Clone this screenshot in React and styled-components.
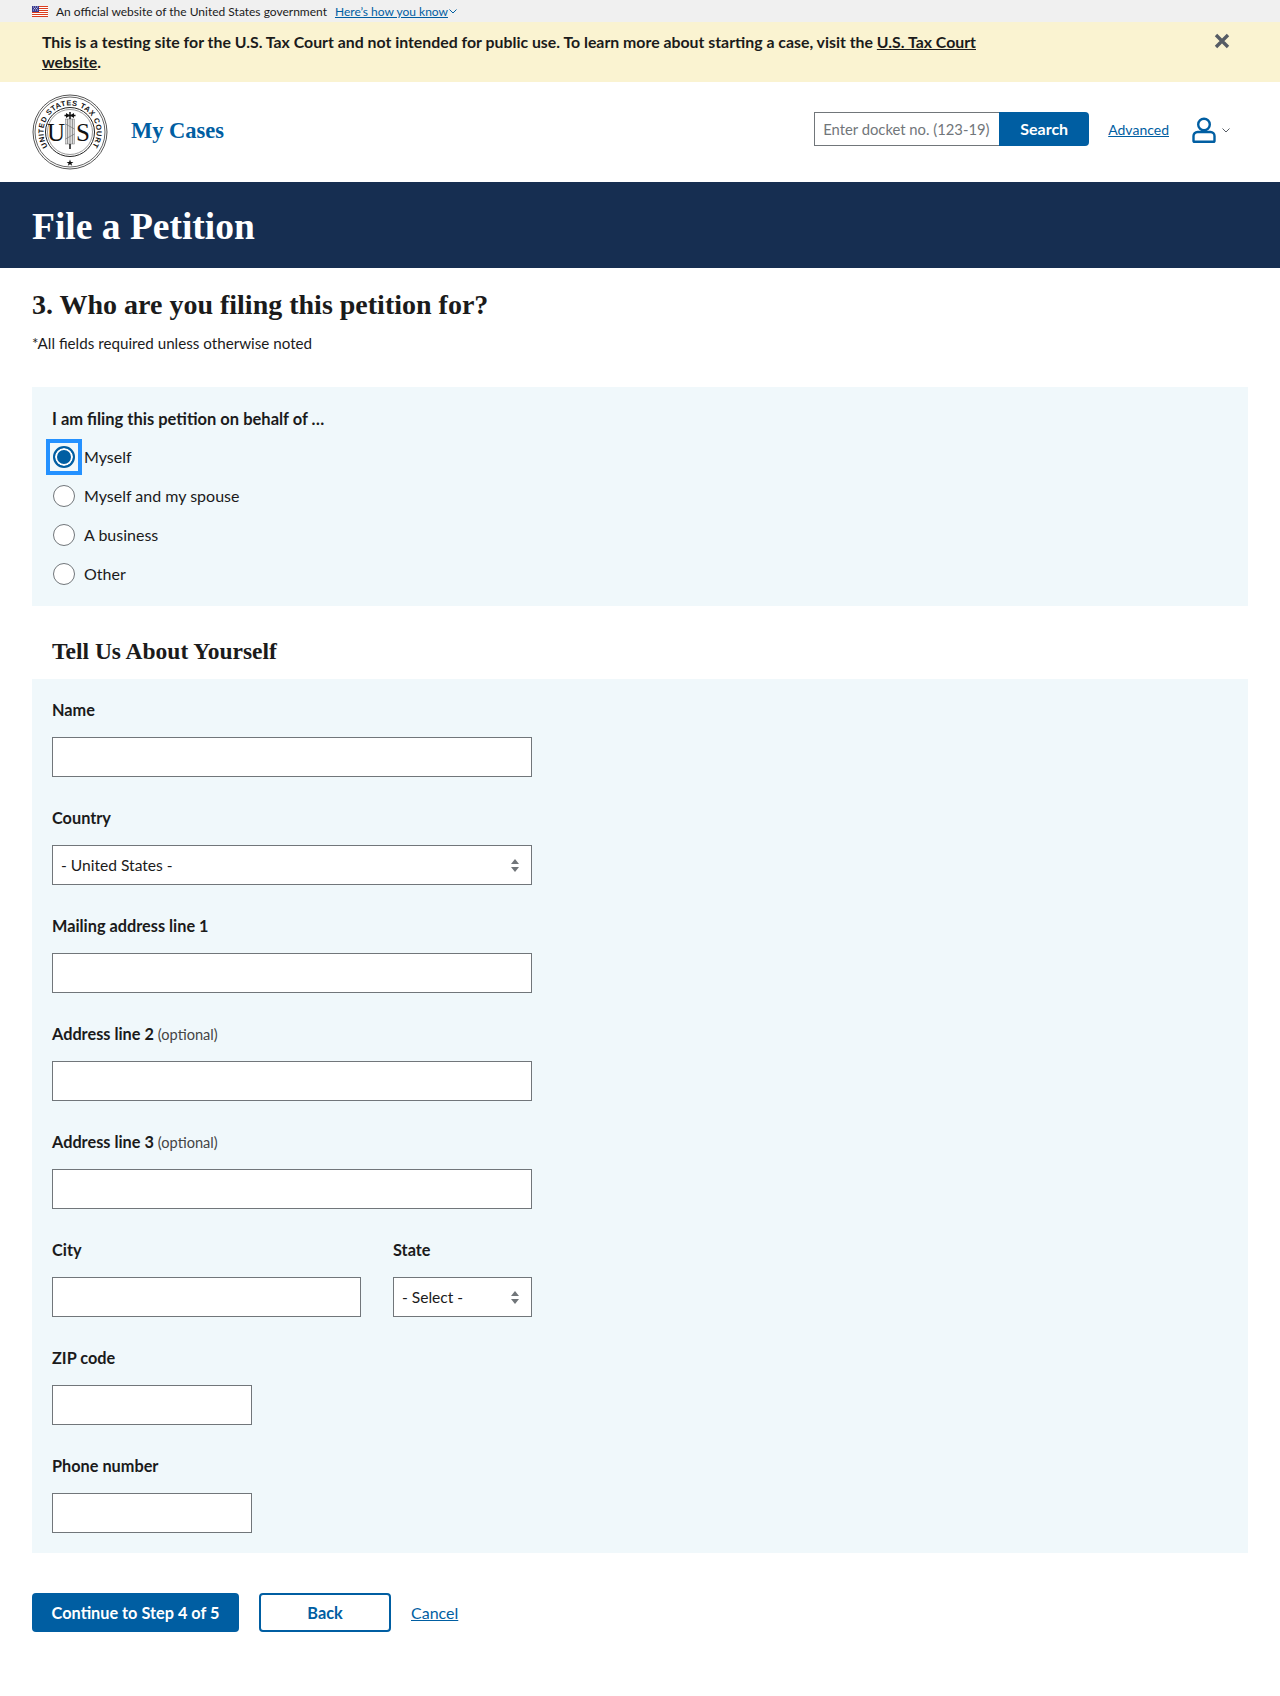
import React from 'react';
import styled, { createGlobalStyle } from 'styled-components';

const blue = '#005ea2';
const ink = '#1b1b1b';
const sans = '"Lato", "Noto Sans", sans-serif';
const serif = '"Liberation Serif", serif';

const GlobalStyle = createGlobalStyle`
  html, body { margin: 0; padding: 0; background: #fff; }
  body { font-family: ${sans}; color: ${ink}; }
  * { box-sizing: border-box; }
`;

const Page = styled.div`
  width: 1280px;
  height: 1696px;
  overflow: hidden;
`;

const GovBanner = styled.div`
  height: 22px;
  background: #f0f0f0;
  display: flex;
  align-items: center;
  padding-left: 32px;
  font-size: 12px;
`;

const GovText = styled.span`
  margin: 0 8px 0 8px;
`;

const GovLink = styled.a`
  color: ${blue};
  text-decoration: underline;
`;

const AlertBar = styled.div`
  height: 60px;
  background: #faf3d1;
  padding: 10px 32px 0 42px;
  display: flex;
  justify-content: space-between;
`;

const AlertText = styled.div`
  width: 960px;
  font-size: 15.85px;
  line-height: 20px;
  font-weight: 700;
  a { color: ${ink}; text-decoration: underline; }
`;

const CloseBtn = styled.div`
  margin: 1px 18px 0 0;
  width: 16px;
  height: 16px;
`;

const Header = styled.header`
  height: 100px;
  display: flex;
  align-items: center;
  justify-content: space-between;
  padding: 0 49px 0 32px;
`;

const Brand = styled.div`
  display: flex;
  align-items: center;
  gap: 23px;
`;

const BrandLink = styled.a`
  font-family: ${serif};
  font-weight: 700;
  font-size: 22.5px;
  color: ${blue};
  position: relative;
  top: -1px;
`;

const HeaderTools = styled.div`
  display: flex;
  align-items: center;
  margin-top: -6px;
`;

const SearchInput = styled.div`
  width: 185px;
  height: 34px;
  border: 1px solid #71767a;
  border-right: 0;
  font-size: 14.8px;
  color: #71767a;
  display: flex;
  align-items: center;
  padding-left: 8px;
  white-space: nowrap;
  overflow: hidden;
`;

const SearchBtn = styled.div`
  width: 90px;
  height: 34px;
  padding-bottom: 2px;
  background: ${blue};
  color: #fff;
  border-radius: 0 4px 4px 0;
  font-weight: 700;
  font-size: 16px;
  display: flex;
  align-items: center;
  justify-content: center;
`;

const Advanced = styled.a`
  margin-left: 19px;
  font-size: 14px;
  color: ${blue};
  text-decoration: underline;
`;

const UserWrap = styled.div`
  margin: 2px 0 0 23px;
  display: flex;
  align-items: center;
  gap: 5px;
`;

const Hero = styled.div`
  height: 86px;
  background: #162e51;
  color: #fff;
  display: flex;
  align-items: center;
  padding: 2px 0 0 32px;
`;

const HeroTitle = styled.h1`
  margin: 0;
  font-family: ${serif};
  font-weight: 700;
  font-size: 37.5px;
`;

const Main = styled.main`
  padding: 0 32px;
`;

const StepTitle = styled.h2`
  margin: 19px 0 0;
  font-family: ${serif};
  font-weight: 700;
  font-size: 28px;
  line-height: 36px;
`;

const Required = styled.p`
  margin: 9px 0 0;
  font-size: 15.2px;
  line-height: 22px;
`;

const Panel = styled.div`
  background: #f0f8fb;
  padding: 20px;
`;

const Fieldset = styled(Panel)`
  margin-top: 33px;
  height: 219px;
  padding-top: 21px;
`;

const Legend = styled.div`
  font-weight: 700;
  font-size: 16.5px;
  line-height: 22px;
`;

const RadioList = styled.div`
  margin-top: 7px;
`;

const RadioRow = styled.div`
  height: 39px;
  display: flex;
  align-items: center;
  gap: 9px;
  padding-left: 1px;
  font-size: 16px;
`;

const Radio = styled.span`
  position: relative;
  width: 22px;
  height: 22px;
  border-radius: 50%;
  flex: none;
  background: ${({ $on }) => ($on ? blue : '#fff')};
  border: ${({ $on }) => ($on ? `2px solid ${blue}` : '1px solid #71767a')};
  box-shadow: ${({ $on }) => ($on ? 'inset 0 0 0 2px #fff' : 'none')};
`;

const FocusRing = styled.span`
  position: absolute;
  top: -9px;
  left: -9px;
  width: 36px;
  height: 36px;
  border: 4px solid #2491ff;
`;

const SubTitle = styled.h3`
  margin: 0;
  height: 73px;
  padding: 30px 0 0 20px;
  font-family: ${serif};
  font-weight: 700;
  font-size: 23.5px;
  line-height: 30px;
`;

const FormPanel = styled(Panel)`
  height: 874px;
`;

const Field = styled.div`
  width: ${({ $w }) => $w || '480px'};
  margin-bottom: 30px;
`;

const Row = styled.div`
  display: flex;
  gap: 32px;
`;

const Label = styled.label`
  display: block;
  height: 22px;
  font-weight: 700;
  font-size: 16.3px;
  line-height: 22px;
  margin-bottom: 16px;
  span {
    font-weight: 400;
    font-size: 14.6px;
    line-height: 1;
    color: #454545;
  }
`;

const TextBox = styled.div`
  height: 40px;
  border: 1px solid #71767a;
  background: #fff;
`;

const SelectBox = styled(TextBox)`
  display: flex;
  align-items: center;
  justify-content: space-between;
  padding: 0 12px 0 8px;
  font-size: 15.6px;
`;

const Actions = styled.div`
  margin-top: 40px;
  display: flex;
  align-items: center;
`;

const Primary = styled.div`
  width: 207px;
  height: 39px;
  background: ${blue};
  border-radius: 4px;
  color: #fff;
  font-weight: 700;
  font-size: 16.3px;
  display: flex;
  align-items: center;
  justify-content: center;
`;

const Secondary = styled.div`
  width: 132px;
  height: 39px;
  margin-left: 20px;
  border: 2px solid ${blue};
  border-radius: 4px;
  color: ${blue};
  font-weight: 700;
  font-size: 16.3px;
  display: flex;
  align-items: center;
  justify-content: center;
`;

const CancelLink = styled.a`
  margin-left: 20px;
  color: ${blue};
  font-size: 16px;
  text-decoration: underline;
`;

function Flag() {
  const stripes = [];
  for (let i = 0; i < 6; i++) {
    stripes.push(<rect key={i} x="0" y={i * 2} width="16" height="1" fill="#db3e1f" />);
  }
  return (
    <svg width="16" height="11" viewBox="0 0 16 11">
      <rect width="16" height="11" fill="#fff" />
      {stripes}
      <rect width="7" height="6" fill="#3b3b8f" />
      <path d="M1 1h1M3 1h1M5 1h1M2 2.5h1M4 2.5h1M1 4h1M3 4h1M5 4h1" stroke="#fff" strokeWidth=".7" />
    </svg>
  );
}

function Chevron({ color, size }) {
  return (
    <svg width={size} height={size} viewBox="0 0 10 10">
      <path d="M1.5 3.5 5 7l3.5-3.5" fill="none" stroke={color} strokeWidth="1" />
    </svg>
  );
}

function Seal() {
  return (
    <svg width="76" height="76" viewBox="0 0 76 76">
      <defs>
        <path id="sealArc" d="M38 64.5A26.5 26.5 0 1 1 38 11.5A26.5 26.5 0 1 1 38 64.5" />
      </defs>
      <circle cx="38" cy="38" r="37" fill="#fff" stroke="#555" strokeWidth="1" />
      <circle cx="38" cy="38" r="35" fill="none" stroke="#222" strokeWidth=".7" />
      <circle cx="38" cy="38" r="24.5" fill="none" stroke="#222" strokeWidth="1" />
      <circle cx="38" cy="38" r="22.5" fill="none" stroke="#555" strokeWidth=".6" />
      <text fontFamily="Liberation Sans, sans-serif" fontSize="7.4" fontWeight="700" fill="#111" letterSpacing=".5">
        <textPath href="#sealArc" startOffset="50%" textAnchor="middle">UNITED STATES TAX COURT</textPath>
      </text>
      <rect x="33.5" y="25" width="9" height="25" fill="#ddd" stroke="#777" strokeWidth=".5" />
      <path d="M35.5 25v25M38 25v25M40.5 25v25M33.5 30l9 5M33.5 45l9-5" stroke="#666" strokeWidth=".6" />
      <path d="M38 18v7M32.5 21.5h11M38 50v5" stroke="#111" strokeWidth="1.5" />
      <path d="M34 19l4 2.5 4-2.5v5l-4-2.5-4 2.5z" fill="#111" />
      <text x="24" y="47" fontFamily="Liberation Serif, serif" fontSize="25" fill="#111" textAnchor="middle">U</text>
      <text x="51" y="47" fontFamily="Liberation Serif, serif" fontSize="25" fill="#111" textAnchor="middle">S</text>
      <path d="M38 65.5l.9 2.4h2.5l-2 1.5.8 2.4-2.2-1.5-2.2 1.5.8-2.4-2-1.5h2.5z" fill="#111" />
    </svg>
  );
}

function UserIcon() {
  return (
    <svg width="24" height="26" viewBox="0 0 24 26" fill="none" stroke={blue} strokeWidth="2.4">
      <circle cx="12" cy="7.5" r="5.8" />
      <path d="M5.5 15h13a4 4 0 0 1 4 4v5a.8.8 0 0 1-.8.8H2.3a.8.8 0 0 1-.8-.8v-5a4 4 0 0 1 4-4z" />
    </svg>
  );
}

function SortIcon() {
  return (
    <svg width="8" height="13" viewBox="0 0 8 13" fill="#71767a">
      <path d="M4 0l4 5H0zM4 13L0 8h8z" />
    </svg>
  );
}

const radios = ['Myself', 'Myself and my spouse', 'A business', 'Other'];

function TextField({ label, optional, width }) {
  return (
    <Field $w={width}>
      <Label>
        {label} {optional && <span>(optional)</span>}
      </Label>
      <TextBox />
    </Field>
  );
}

function SelectField({ label, value, width }) {
  return (
    <Field $w={width}>
      <Label>{label}</Label>
      <SelectBox>
        {value}
        <SortIcon />
      </SelectBox>
    </Field>
  );
}

export default function App() {
  return (
    <Page>
      <GlobalStyle />
      <GovBanner>
        <Flag />
        <GovText>An official website of the United States government</GovText>
        <GovLink>Here’s how you know</GovLink>
        <Chevron color={blue} size={10} />
      </GovBanner>
      <AlertBar>
        <AlertText>
          This is a testing site for the U.S. Tax Court and not intended for public use. To learn
          more about starting a case, visit the <a>U.S. Tax Court website</a>.
        </AlertText>
        <CloseBtn>
          <svg width="16" height="16" viewBox="0 0 16 16">
            <path d="M2 2l12 12M14 2L2 14" stroke="#565c65" strokeWidth="3.4" />
          </svg>
        </CloseBtn>
      </AlertBar>
      <Header>
        <Brand>
          <Seal />
          <BrandLink>My Cases</BrandLink>
        </Brand>
        <HeaderTools>
          <SearchInput>Enter docket no. (123-19)</SearchInput>
          <SearchBtn>Search</SearchBtn>
          <Advanced>Advanced</Advanced>
          <UserWrap>
            <UserIcon />
            <Chevron color="#565c65" size={10} />
          </UserWrap>
        </HeaderTools>
      </Header>
      <Hero>
        <HeroTitle>File a Petition</HeroTitle>
      </Hero>
      <Main>
        <StepTitle>3. Who are you filing this petition for?</StepTitle>
        <Required>*All fields required unless otherwise noted</Required>
        <Fieldset>
          <Legend>I am filing this petition on behalf of …</Legend>
          <RadioList>
            {radios.map((r, i) => (
              <RadioRow key={r}>
                <Radio $on={i === 0}>{i === 0 && <FocusRing />}</Radio>
                {r}
              </RadioRow>
            ))}
          </RadioList>
        </Fieldset>
        <SubTitle>Tell Us About Yourself</SubTitle>
        <FormPanel>
          <TextField label="Name" />
          <SelectField label="Country" value="- United States -" />
          <TextField label="Mailing address line 1" />
          <TextField label="Address line 2" optional />
          <TextField label="Address line 3" optional />
          <Row>
            <TextField label="City" width="309px" />
            <SelectField label="State" value="- Select -" width="139px" />
          </Row>
          <TextField label="ZIP code" width="200px" />
          <TextField label="Phone number" width="200px" />
        </FormPanel>
        <Actions>
          <Primary>Continue to Step 4 of 5</Primary>
          <Secondary>Back</Secondary>
          <CancelLink>Cancel</CancelLink>
        </Actions>
      </Main>
    </Page>
  );
}
